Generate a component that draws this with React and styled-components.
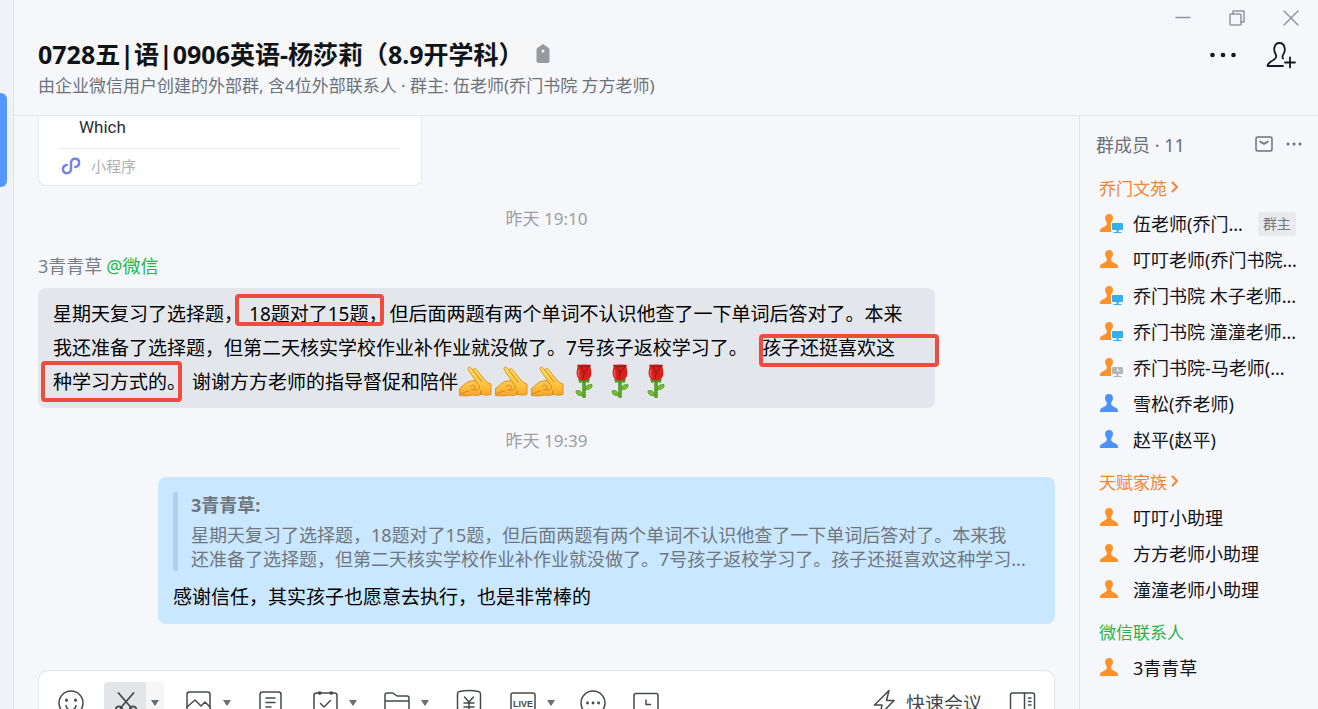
import React from "react";
import styled, { createGlobalStyle } from "styled-components";

const GlobalStyle = createGlobalStyle`
  * {
    box-sizing: border-box;
  }

  body {
    margin: 0;
    background: #f5f7fb;
    color: #101318;
    font-family: "Noto Sans", "Noto Sans CJK SC", sans-serif;
    font-weight: 400;
  }

  button {
    padding: 0;
    border: 0;
    background: none;
    color: inherit;
    font: inherit;
    cursor: pointer;
  }

  svg {
    display: block;
  }
`;

const Window = styled.div`
  display: flex;
  height: 100vh;
  overflow: hidden;
`;

const Rail = styled.div`
  flex: none;
  width: 14px;
  padding-top: 93px;
  border-right: 1px solid #dfe3e9;
  background: #eff3f8;
`;

const ActiveChat = styled.div`
  width: 7px;
  height: 94px;
  border-radius: 0 6px 6px 0;
  background: #5596ff;
`;

const Main = styled.div`
  flex: 1;
  min-width: 0;
  display: flex;
  flex-direction: column;
`;

const Header = styled.header`
  flex: none;
  display: flex;
  justify-content: space-between;
  height: 116px;
  padding-left: 24px;
  border-bottom: 1px solid #e1e4e9;
`;

const Heading = styled.div`
  padding-top: 36px;
  white-space: nowrap;
`;

const TitleRow = styled.div`
  display: flex;
  align-items: center;
  width: max-content;
  gap: 12px;
  background: #f6f6f7;
`;

const Title = styled.h1`
  margin: 0;
  font-size: 25px;
  line-height: 36px;
  font-weight: 700;
`;

const Subtitle = styled.p`
  margin: 0;
  color: #6d727a;
  font-size: 17px;
  line-height: 28px;
`;

const HeaderControls = styled.div`
  display: flex;
  flex-direction: column;
  align-items: flex-end;
`;

const ControlRow = styled.div`
  display: flex;
  height: ${(props) => (props.$actions ? 38 : 36)}px;
  padding-right: ${(props) => (props.$actions ? 8 : 0)}px;
  color: ${(props) => (props.$actions ? "#16191e" : "#92969c")};

  button {
    display: grid;
    place-items: center;
    width: ${(props) => (props.$actions ? 58 : 54)}px;
  }
`;

const Body = styled.div`
  flex: 1;
  min-height: 0;
  display: flex;
`;

const Chat = styled.main`
  flex: 1;
  min-width: 0;
  display: flex;
  flex-direction: column;
  padding: 0 24px;
`;

const Messages = styled.div`
  flex: 1;
  min-height: 0;
  overflow: hidden;
`;

const MiniCard = styled.article`
  width: 384px;
  padding: 0 20px;
  border: 1px solid #e6e8ec;
  border-top: 0;
  border-radius: 0 0 8px 8px;
  background: #fff;
`;

const CardText = styled.div`
  height: 33px;
  padding-left: 20px;
  border-bottom: 1px solid #ebecee;
  color: #2b2e33;
  font-family: Roboto, sans-serif;
  font-size: 17px;
  line-height: 22px;
`;

const CardFooter = styled.div`
  display: flex;
  align-items: center;
  gap: 10px;
  height: 36px;
  padding: 0 2px 3px;
  color: #aeb0b4;
  font-size: 15px;
`;

const Time = styled.div`
  height: ${(props) => props.$height}px;
  line-height: 66px;
  color: #9b9ea4;
  font-size: 17px;
  text-align: center;
`;

const Sender = styled.div`
  height: 36px;
  color: #797d84;
  font-size: 18px;
  line-height: 28px;

  span {
    margin-left: 4px;
    color: #1fb64a;
  }
`;

const Bubble = styled.div`
  width: calc(100% - 120px);
  margin-left: ${(props) => (props.$own ? "auto" : 0)};
  padding: ${(props) => (props.$own ? "15px 15px 14px" : "8px 15px 10px")};
  border-radius: 8px;
  background: ${(props) => (props.$own ? "#c9e7ff" : "#e3e7ec")};
  color: #000;
  font-size: 19px;
`;

const Line = styled.div`
  display: flex;
  align-items: center;
  height: 34px;
  white-space: nowrap;
`;

const Marked = styled.mark`
  position: relative;
  padding: ${(props) => props.$space};
  background: none;
  color: inherit;

  &::after {
    content: "";
    position: absolute;
    inset: ${(props) => props.$box};
    border: 4px solid #f04b3f;
    border-radius: 4px;
  }
`;

const Emoji = styled.span`
  width: 36px;
  height: 34px;
`;

const Quote = styled.blockquote`
  margin: 0 0 13px;
  padding-left: 13px;
  border-left: 5px solid #b5cfe9;
  border-radius: 2px;
  color: #70767d;
  font-size: 18px;
  line-height: 24px;
  white-space: nowrap;
`;

const QuoteAuthor = styled.div`
  margin-bottom: 5px;
  font-weight: 700;
  line-height: 26px;
`;

const Reply = styled.p`
  margin: 0;
  line-height: 26px;
`;

const Composer = styled.div`
  flex: none;
  display: flex;
  justify-content: space-between;
  height: 39px;
  padding: 11px 18px 0 11px;
  border: 1px solid #e2e4e8;
  border-bottom: 0;
  border-radius: 10px 10px 0 0;
  background: #fff;
  color: #45494f;
  overflow: hidden;
`;

const Tools = styled.div`
  display: flex;
  gap: 12px;
  height: 42px;
`;

const Tool = styled.div`
  display: flex;
  border-radius: 4px;
  background: ${(props) => (props.$active ? "#f6f6f7" : "none")};
  overflow: hidden;
`;

const ToolButton = styled.button`
  display: grid;
  place-items: center;
  width: 42px;
  background: ${(props) => (props.$active ? "#e3e5e7" : "none")};
`;

const ToolArrow = styled.button`
  display: grid;
  place-items: center;
  width: 18px;
`;

const MeetingTools = styled.div`
  display: flex;
  gap: 26px;
  height: 42px;

  button {
    display: flex;
    align-items: center;
    gap: 9px;
    font-size: 19px;
  }
`;

const Sidebar = styled.aside`
  flex: none;
  width: 239px;
  padding: 0 16px;
  border-left: 1px solid #e1e4e9;
`;

const SidebarHeader = styled.div`
  display: flex;
  align-items: center;
  gap: 13px;
  height: 53px;
  padding-top: 2px;
  color: #6b7078;

  h2 {
    flex: 1;
    margin: 0;
    font-size: 18px;
    font-weight: 400;
  }
`;

const GroupTitle = styled.h3`
  display: flex;
  align-items: center;
  gap: 4px;
  height: 36px;
  margin: 0;
  padding-left: 3px;
  color: ${(props) => props.$color};
  font-size: 17px;
  font-weight: 400;
`;

const MemberList = styled.ul`
  margin: 0 0 6px;
  padding: 0 0 0 3px;
  list-style: none;
`;

const Member = styled.li`
  display: flex;
  align-items: center;
  gap: 8px;
  height: 36px;
  font-size: 18px;
  white-space: nowrap;
`;

const OwnerTag = styled.span`
  margin: 2px 0 0 7px;
  padding: 0 5px;
  border-radius: 3px;
  background: #e8eaee;
  color: #71757c;
  font-size: 14px;
  line-height: 24px;
`;

const groups = [
  {
    name: "乔门文苑",
    color: "#f9822f",
    expandable: true,
    members: [
      { name: "伍老师(乔门...", device: "online", owner: true },
      { name: "叮叮老师(乔门书院..." },
      { name: "乔门书院 木子老师...", device: "online" },
      { name: "乔门书院 潼潼老师...", device: "online" },
      { name: "乔门书院-马老师(...", device: "away" },
      { name: "雪松(乔老师)", color: "#4a93f7" },
      { name: "赵平(赵平)", color: "#4a93f7" },
    ],
  },
  {
    name: "天赋家族",
    color: "#f9822f",
    expandable: true,
    members: [{ name: "叮叮小助理" }, { name: "方方老师小助理" }, { name: "潼潼老师小助理" }],
  },
  {
    name: "微信联系人",
    color: "#1fb64a",
    members: [{ name: "3青青草" }],
  },
];

function PersonIcon({ color = "#ff9129", device }) {
  const screen = device === "away" ? "#b3b6b9" : "#35aef0";
  return (
    <svg width="26" height="22" viewBox="-1 -2 26 22" aria-hidden="true">
      <path
        d="M9 0c-2.600 0-4 1.800-4 4.300 0 2.200 1.900 3.300 1.900 5.200 0 1.900-1.400 2.600-3.200 3.400C1.600 13.800 0 14.600 0 17v1h18v-1c0-2.400-1.600-3.200-3.700-4.100-1.800-.8-3.200-1.500-3.200-3.400 0-1.900 1.900-3 1.900-5.200C13 1.800 11.600 0 9 0z"
        fill={color}
      />
      {device && (
        <g>
          <path d="M11 8h14v12H11z" fill="#f5f7fb" />
          <rect x="12" y="9" width="11" height="7" rx="1" fill={screen} />
          <path d="M16.500 16h2v2h3v1h-8v-1h3z" fill={screen} />
          {device === "away" && <path d="M17.500 10.500v2.500h2" fill="none" stroke="#fff" />}
        </g>
      )}
    </svg>
  );
}

function HandEmoji() {
  return (
    <svg width="34" height="34" viewBox="0 0 34 34" aria-hidden="true">
      <defs>
        <linearGradient id="skin" x1="0" y1="0" x2="0" y2="1">
          <stop offset="0" stopColor="#ffdf62" />
          <stop offset="0.6" stopColor="#ffc543" />
          <stop offset="1" stopColor="#f7a42a" />
        </linearGradient>
      </defs>
      <path
        d="M1.500 31.500V24.500C5 22.500 7 18.500 11 17.500c2-.6 4-1 6.500-.8L10.500 6C9.300 3.600 11.300 2 13 3.800l2.500 3C15 4.500 17 3.800 18.500 5.500L26 15c2 2.700 4 4 7 5v10.500c-3 .8-7 .8-10-.3-2 1.300-5 1.600-8 .8-4 1-9 1.200-13.500.5z"
        fill="url(#skin)"
        stroke="#dc8a22"
        strokeWidth="0.900"
      />
      <path
        d="M15.500 6.800L24 18M17.500 16.700l3.500 5c1.200 3-1.500 5.300-5 4.300M12 23c1.500-2.500 5-2.300 5 .5 0 2.200-2.800 3.200-4 1.500M23 30.200c-1-1.500-.5-3.200 1-4.200M2 30c3-.5 5.500-3 9-3"
        fill="none"
        stroke="#cf7a18"
        strokeWidth="0.900"
      />
    </svg>
  );
}

function RoseEmoji() {
  return (
    <svg width="34" height="34" viewBox="0 0 34 34" aria-hidden="true">
      <path d="M16.500 16h3v17.500h-3z" fill="#5aa821" stroke="#3f8717" strokeWidth="0.500" />
      <path
        d="M16.500 31.500c-4 .5-6.500-1-6.500-4.500 3.500-1.500 6 .5 6.500 4.500zM19.500 25.500c0-4 2.500-5 6.500-5 .5 3.500-2.500 5.500-6.500 5z"
        fill="#76bf30"
        stroke="#3f8717"
        strokeWidth="0.700"
      />
      <path d="M12 15h12l-1.500 4-3-1-1.500 1.500-1.500-1.500-3 1z" fill="#4b9a1c" />
      <path d="M11.500 1C14 .3 22 .3 24.500 1c-.5 3 1.500 6 .8 9.500-.6 3.500-3 6-7.300 6s-6.700-2.500-7.300-6C10 7 12 4 11.500 1z" fill="#d8211c" />
      <path d="M11.500 1.200c4 1.800 9 1.800 13 0M15 3c1.500 2 2 4.500 3 6M23.500 2.500C20 5 17 9 17.500 15" fill="none" stroke="#8f0f10" />
      <path d="M13 6c-.8 2.500-.8 5 .5 7" fill="none" stroke="#f3604f" strokeWidth="1.200" />
    </svg>
  );
}

const stroke = {
  fill: "none",
  stroke: "currentColor",
  strokeWidth: 1.5,
  strokeLinejoin: "round",
  strokeLinecap: "round",
};

const toolDrawings = {
  smile: (
    <>
      <circle cx="14" cy="14" r="12" />
      <path d="M9 16.500c.5 3 2.500 4.500 5 4.500s4.500-1.500 5-4.500" />
      <path d="M9.500 11v.2M18.500 11v.2" strokeWidth="3" />
    </>
  ),
  cut: (
    <g strokeWidth="1.800">
      <path d="M7.500 4l13 15M22.500 4l-13 15" />
      <circle cx="8" cy="20.500" r="3.200" />
      <circle cx="22" cy="20.500" r="3.200" />
    </g>
  ),
  image: (
    <>
      <rect x="4" y="3" width="23" height="22" rx="2.500" />
      <path d="M4 18l8-7 6 6 4-4 5 5" />
    </>
  ),
  doc: (
    <>
      <rect x="5" y="3" width="21" height="23" rx="2.500" />
      <path d="M11 9h9M11 13.500h9M11 18h5" />
    </>
  ),
  task: (
    <>
      <rect x="5" y="4" width="23" height="22" rx="2.500" />
      <path d="M11.500 14.500l3.500 3.500 6.500-6.500" />
      <path d="M10.500 4h.5M22 4h.5" strokeWidth="3.500" />
    </>
  ),
  folder: <path d="M4 25V6a2 2 0 0 1 2-2h6l4 3h10a2 2 0 0 1 2 2v16M4 12h24" />,
  money: (
    <>
      <path d="M4.500 26V5c0-1.500.7-2.200 2-2.500 6-1.300 13-1.300 19 0 1.300.3 2 1 2 2.500v21z" />
      <path d="M11.500 8l4.500 5 4.500-5M16 13v9M11 14h10M11 18h10" />
    </>
  ),
  live: (
    <>
      <rect x="4" y="4" width="24" height="21" rx="2" />
      <text
        x="16"
        y="18"
        textAnchor="middle"
        fontSize="9"
        fontWeight="700"
        fontFamily="Liberation Sans, sans-serif"
        fill="currentColor"
        stroke="none"
      >
        LIVE
      </text>
    </>
  ),
  more: (
    <>
      <circle cx="14" cy="14" r="12" />
      <path d="M8.500 14h.1M14 14h.1M19.500 14h.1" strokeWidth="2.800" />
    </>
  ),
  history: (
    <>
      <rect x="1" y="4.500" width="24" height="22" rx="2" />
      <path d="M13 11v4.500h4.500" />
    </>
  ),
};

const tools = [
  { icon: "smile", label: "表情" },
  { icon: "cut", label: "截图", menu: true, active: true },
  { icon: "image", label: "图片", menu: true },
  { icon: "doc", label: "文档" },
  { icon: "task", label: "待办", menu: true },
  { icon: "folder", label: "文件", menu: true },
  { icon: "money", label: "收款" },
  { icon: "live", label: "直播", menu: true },
  { icon: "more", label: "更多" },
  { icon: "history", label: "聊天记录" },
];

function ChatHeader() {
  return (
    <Header>
      <Heading>
        <TitleRow>
          <Title>0728五|语|0906英语-杨莎莉（8.9开学科）</Title>
          <svg width="14" height="20" viewBox="0 0 14 20" aria-hidden="true">
            <path d="M7 0l5 3.500c1 .7 1.500 1.500 1.500 2.500v11a2 2 0 0 1-2 2h-9a2 2 0 0 1-2-2V6c0-1 .5-1.800 1.500-2.500z" fill="#969a9f" />
            <circle cx="7" cy="7" r="1.500" fill="#f5f7fb" />
          </svg>
        </TitleRow>
        <Subtitle>由企业微信用户创建的外部群, 含4位外部联系人 · 群主: 伍老师(乔门书院 方方老师)</Subtitle>
      </Heading>
      <HeaderControls>
        <ControlRow>
          <button aria-label="最小化">
            <svg width="16" height="16" {...stroke}><path d="M1 7.500h14" /></svg>
          </button>
          <button aria-label="还原">
            <svg width="16" height="16" {...stroke}>
              <rect x="1" y="4" width="11" height="11" rx="1" />
              <path d="M4 4V1h11v11h-3" />
            </svg>
          </button>
          <button aria-label="关闭">
            <svg width="16" height="16" {...stroke}><path d="M1 1l14 14M15 1L1 15" /></svg>
          </button>
        </ControlRow>
        <ControlRow $actions>
          <button aria-label="更多">
            <svg width="28" height="6" fill="currentColor">
              <circle cx="3.500" cy="3" r="2.300" />
              <circle cx="14" cy="3" r="2.300" />
              <circle cx="24.500" cy="3" r="2.300" />
            </svg>
          </button>
          <button aria-label="添加成员">
            <svg width="30" height="28" {...stroke} strokeWidth="1.800">
              <path d="M17 17.500c-1-1.500-.5-3 .5-4.500 1-1.600 1.700-3.500 1.200-6C18.200 4 16.200 2 13.500 2S8.800 4 8.300 7c-.4 2.500.3 4.400 1.200 6 1.400 2.500.5 4.800-2.500 6.300-3 1.600-5.300 2.700-5.500 5.700h15.500" />
              <path d="M19 21.500h10M24 16.500v10" />
            </svg>
          </button>
        </ControlRow>
      </HeaderControls>
    </Header>
  );
}

function MessageList() {
  return (
    <Messages>
      <MiniCard>
        <CardText>Which</CardText>
        <CardFooter>
          <svg width="20" height="20" viewBox="0 0 21 21" fill="none" stroke="#7683e0" strokeWidth="2.600" strokeLinecap="round" aria-hidden="true">
            <path d="M6 9.500C3.500 10 2 11.700 2 14c0 2.400 1.800 4 4.200 4s4.300-1.700 4.300-4V7c0-2.300 1.900-4 4.300-4S19 4.600 19 7c0 2.300-1.500 4-4 4.500" />
          </svg>
          小程序
        </CardFooter>
      </MiniCard>
      <Time $height={66}>昨天 19:10</Time>
      <Sender>
        3青青草<span>@微信</span>
      </Sender>
      <Bubble>
        <Line>
          星期天复习了选择题，
          <Marked $space="0 2px 0 6px" $box="-5px 6px 1px -8px">18题对了15题，</Marked>
          但后面两题有两个单词不认识他查了一下单词后答对了。本来
        </Line>
        <Line>
          我还准备了选择题，但第二天核实学校作业补作业就没做了。7号孩子返校学习了。
          <Marked $space="0 0 0 14px" $box="1px -44px -6px 11px">孩子还挺喜欢这</Marked>
        </Line>
        <Line>
          <Marked $space="0 6px 0 0" $box="-6px 10px -7px -12px">种学习方式的。</Marked>
          谢谢方方老师的指导督促和陪伴
          <Emoji><HandEmoji /></Emoji>
          <Emoji><HandEmoji /></Emoji>
          <Emoji><HandEmoji /></Emoji>
          <Emoji><RoseEmoji /></Emoji>
          <Emoji><RoseEmoji /></Emoji>
          <Emoji><RoseEmoji /></Emoji>
        </Line>
      </Bubble>
      <Time $height={69}>昨天 19:39</Time>
      <Bubble $own>
        <Quote>
          <QuoteAuthor>3青青草:</QuoteAuthor>
          星期天复习了选择题，18题对了15题，但后面两题有两个单词不认识他查了一下单词后答对了。本来我
          <br />
          还准备了选择题，但第二天核实学校作业补作业就没做了。7号孩子返校学习了。孩子还挺喜欢这种学习...
        </Quote>
        <Reply>感谢信任，其实孩子也愿意去执行，也是非常棒的</Reply>
      </Bubble>
    </Messages>
  );
}

function Toolbar() {
  return (
    <Composer>
      <Tools>
        {tools.map((tool) => (
          <Tool key={tool.icon} $active={tool.active}>
            <ToolButton aria-label={tool.label} $active={tool.active}>
              <svg width="28" height="28" overflow="visible" {...stroke}>{toolDrawings[tool.icon]}</svg>
            </ToolButton>
            {tool.menu && (
              <ToolArrow aria-label={`${tool.label}选项`}>
                <svg width="8" height="6" fill="#6c7076"><path d="M0 0h8L4.500 5.500h-1z" /></svg>
              </ToolArrow>
            )}
          </Tool>
        ))}
      </Tools>
      <MeetingTools>
        <button>
          <svg width="24" height="28" {...stroke}>
            <path d="M16 1.500L1.500 16H9L7 26l14-14.500h-7.500z" />
          </svg>
          快速会议
        </button>
        <button aria-label="侧边栏">
          <svg width="28" height="28" {...stroke}>
            <rect x="2.500" y="4" width="24" height="22" rx="2" />
            <path d="M16.500 4v22M20.500 9h2.500M20.500 12.500h2.500M20.500 16h2.500" />
          </svg>
        </button>
      </MeetingTools>
    </Composer>
  );
}

function MemberPanel() {
  return (
    <Sidebar>
      <SidebarHeader>
        <h2>群成员 · 11</h2>
        <button aria-label="群邮件">
          <svg width="18" height="16" {...stroke}>
            <rect x="1" y="1" width="16" height="14" rx="2" />
            <path d="M5 5.500l4 2.500 4-2.500" />
          </svg>
        </button>
        <button aria-label="更多">
          <svg width="16" height="4" fill="currentColor">
            <circle cx="2" cy="2" r="1.500" />
            <circle cx="8" cy="2" r="1.500" />
            <circle cx="14" cy="2" r="1.500" />
          </svg>
        </button>
      </SidebarHeader>
      {groups.map((group) => (
        <section key={group.name}>
          <GroupTitle $color={group.color}>
            {group.name}
            {group.expandable && (
              <svg width="8" height="12" {...stroke} strokeWidth="2"><path d="M1.500 1.500L6 6l-4.500 4.500" /></svg>
            )}
          </GroupTitle>
          <MemberList>
            {group.members.map((member) => (
              <Member key={member.name}>
                <PersonIcon color={member.color} device={member.device} />
                {member.name}
                {member.owner && <OwnerTag>群主</OwnerTag>}
              </Member>
            ))}
          </MemberList>
        </section>
      ))}
    </Sidebar>
  );
}

export default function App() {
  return (
    <>
      <GlobalStyle />
      <Window>
        <Rail>
          <ActiveChat />
        </Rail>
        <Main>
          <ChatHeader />
          <Body>
            <Chat>
              <MessageList />
              <Toolbar />
            </Chat>
            <MemberPanel />
          </Body>
        </Main>
      </Window>
    </>
  );
}
